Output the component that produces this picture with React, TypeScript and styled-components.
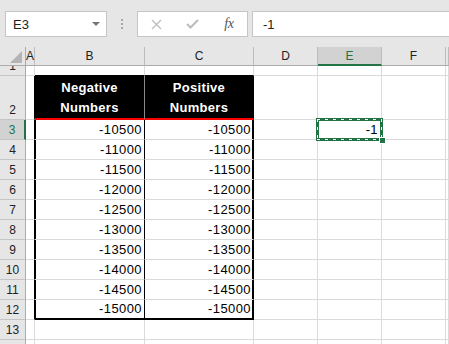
import React from 'react';
import styled, { createGlobalStyle } from 'styled-components';

const GREEN = '#217346';
const GRID = '#dadada';

const GlobalStyle = createGlobalStyle`
  html, body {
    margin: 0;
    padding: 0;
    overflow: hidden;
    background: #fff;
  }
  body {
    font-family: "Liberation Sans", Arial, sans-serif;
  }
`;

const Window = styled.div`
  width: 449px;
  height: 344px;
  overflow: hidden;
  display: flex;
  flex-direction: column;
  background: #fff;
`;

const FormulaBar = styled.div`
  height: 47px;
  flex-shrink: 0;
  box-sizing: border-box;
  background: #e6e6e6;
  display: flex;
  align-items: flex-start;
  padding: 11px 0 0 5px;
`;

const NameBox = styled.div`
  width: 102px;
  height: 26px;
  box-sizing: border-box;
  background: #fff;
  border: 1px solid #c6c6c6;
  display: flex;
  align-items: center;
  justify-content: space-between;
  padding: 0 6px 0 7px;
  font-size: 13px;
  color: #222;
`;

const DropArrow = styled.span`
  width: 0;
  height: 0;
  border-left: 4px solid transparent;
  border-right: 4px solid transparent;
  border-top: 4px solid #767676;
`;

const Grip = styled.div`
  width: 30px;
  height: 26px;
  display: flex;
  flex-direction: column;
  align-items: center;
  justify-content: center;
  gap: 2px;
`;

const GripDot = styled.span`
  width: 2px;
  height: 2px;
  background: #a8a8a8;
`;

const FxBox = styled.div`
  width: 111px;
  height: 26px;
  box-sizing: border-box;
  background: #fff;
  border: 1px solid #c6c6c6;
  display: grid;
  grid-template-columns: repeat(3, 1fr);
  align-items: center;
  justify-items: center;
  margin-right: 4px;
`;

const FxLabel = styled.span`
  font-family: "Liberation Serif", "Times New Roman", serif;
  font-style: italic;
  font-size: 14px;
  color: #555;
  letter-spacing: -0.5px;
`;

const FormulaInput = styled.div`
  flex: 1;
  height: 26px;
  box-sizing: border-box;
  background: #fff;
  border: 1px solid #c6c6c6;
  border-right: none;
  display: flex;
  align-items: center;
  padding-left: 10px;
  font-size: 13px;
  color: #222;
`;

const Sheet = styled.div`
  flex: 1;
  display: grid;
  grid-template-columns: 26px 9px 110px 109px 64px 64px 64px 1fr;
  grid-template-rows: 19px 10px 44px repeat(12, 20px);
  font-size: 13px;
  letter-spacing: 0.4px;
  color: #000;
  overflow: hidden;
`;

const Corner = styled.div`
  position: relative;
  background: #e6e6e6;
  border-right: 1px solid #ababab;
  border-bottom: 1px solid #ababab;
  box-sizing: border-box;
`;

const CornerTri = styled.svg`
  position: absolute;
  right: 3px;
  bottom: 2px;
`;

const ColHead = styled.div<{ $active?: boolean }>`
  box-sizing: border-box;
  background: ${p => (p.$active ? '#d2d2d2' : '#e6e6e6')};
  border-right: 1px solid #bcbcbc;
  border-bottom: ${p => (p.$active ? `2px solid ${GREEN}` : '1px solid #ababab')};
  color: ${p => (p.$active ? GREEN : '#222')};
  font-size: 12px;
  letter-spacing: 0;
  display: flex;
  align-items: center;
  justify-content: center;
  overflow: visible;
  white-space: nowrap;
`;

const RowHead = styled.div<{ $active?: boolean }>`
  box-sizing: border-box;
  background: ${p => (p.$active ? '#d2d2d2' : '#e6e6e6')};
  border-right: ${p => (p.$active ? `2px solid ${GREEN}` : '1px solid #ababab')};
  border-bottom: 1px solid #c4c4c4;
  color: ${p => (p.$active ? GREEN : '#222')};
  font-size: 12px;
  letter-spacing: 0;
  line-height: 16px;
  display: flex;
  align-items: flex-end;
  justify-content: center;
  padding-bottom: 1px;
  overflow: hidden;
`;

const Cell = styled.div<{ $rightBlack?: boolean; $bottomBlack?: boolean }>`
  position: relative;
  box-sizing: border-box;
  border-right: 1px solid ${p => (p.$rightBlack ? '#000' : GRID)};
  border-bottom: 1px solid ${p => (p.$bottomBlack ? '#000' : GRID)};
  display: flex;
  align-items: flex-end;
  justify-content: flex-end;
  line-height: 18px;
  padding-right: 2px;
  white-space: nowrap;
`;

const TitleCell = styled.div<{ $side: 'left' | 'right' }>`
  box-sizing: border-box;
  background: #000;
  color: #fff;
  font-weight: bold;
  letter-spacing: 0.3px;
  line-height: 20px;
  text-align: center;
  display: flex;
  flex-direction: column;
  justify-content: flex-end;
  align-items: center;
  border-right: 1px solid ${p => (p.$side === 'left' ? '#8a8a8a' : '#000')};
  border-bottom: 2px solid #ff0000;
`;

const NumCell = styled.div<{ $side: 'left' | 'right'; $last?: boolean }>`
  box-sizing: border-box;
  border-right: 1px solid #000;
  border-bottom: ${p => (p.$last ? '2px solid #000' : `1px solid ${GRID}`)};
  box-shadow: ${p => (p.$side === 'left' ? 'inset 1px 0 0 #000' : 'inset -1px 0 0 #000')};
  display: flex;
  align-items: flex-end;
  justify-content: flex-end;
  line-height: 18px;
  padding-right: 2px;
`;

const ActiveCell = styled(Cell)`
  overflow: visible;
  z-index: 2;
  padding-right: 3px;
`;

// copy marquee: solid green frame with white ticks running along its middle
const Marquee = styled.div`
  position: absolute;
  top: -2px;
  left: -2px;
  right: -2px;
  bottom: -2px;
  border: 3px solid ${GREEN};
  pointer-events: none;

  &::after {
    content: '';
    position: absolute;
    inset: -2px;
    background:
      repeating-linear-gradient(90deg, #fff 0 3px, transparent 3px 8px) top left / 100% 1px no-repeat,
      repeating-linear-gradient(90deg, #fff 0 3px, transparent 3px 8px) bottom left / 100% 1px no-repeat,
      repeating-linear-gradient(180deg, #fff 0 3px, transparent 3px 8px) top left / 1px 100% no-repeat,
      repeating-linear-gradient(180deg, #fff 0 3px, transparent 3px 8px) top right / 1px 100% no-repeat;
  }
`;

const FillHandle = styled.span`
  position: absolute;
  right: -5px;
  bottom: -5px;
  width: 5px;
  height: 5px;
  background: ${GREEN};
  border: 1px solid #fff;
  z-index: 2;
`;

const CellText = styled.span`
  position: relative;
  z-index: 1;
`;

const columns = ['A', 'B', 'C', 'D', 'E', 'F', 'G'];
const values = Array.from({ length: 10 }, (_, i) => -10500 - i * 500);

function App() {
  const rows: React.ReactNode[] = [];

  // row 1 is short and carries the table's top edge
  rows.push(
    <React.Fragment key="r1">
      <RowHead>1</RowHead>
      <Cell />
      <Cell $bottomBlack />
      <Cell $bottomBlack />
      <Cell />
      <Cell />
      <Cell />
      <Cell />
    </React.Fragment>
  );

  // row 2, the headings
  rows.push(
    <React.Fragment key="r2">
      <RowHead>2</RowHead>
      <Cell $rightBlack />
      <TitleCell $side="left">
        <span>Negative</span>
        <span>Numbers</span>
      </TitleCell>
      <TitleCell $side="right">
        <span>Positive</span>
        <span>Numbers</span>
      </TitleCell>
      <Cell />
      <Cell />
      <Cell />
      <Cell />
    </React.Fragment>
  );

  values.forEach((v, i) => {
    const n = i + 3;
    const last = i === values.length - 1;
    rows.push(
      <React.Fragment key={'r' + n}>
        <RowHead $active={n === 3}>{n}</RowHead>
        <Cell $rightBlack />
        <NumCell $side="left" $last={last}>{v}</NumCell>
        <NumCell $side="right" $last={last}>{v}</NumCell>
        <Cell />
        {n === 3 ? (
          <ActiveCell>
            <Marquee />
            <FillHandle />
            <CellText>-1</CellText>
          </ActiveCell>
        ) : (
          <Cell />
        )}
        <Cell />
        <Cell />
      </React.Fragment>
    );
  });

  [13, 14].forEach(n => {
    rows.push(
      <React.Fragment key={'r' + n}>
        <RowHead>{n}</RowHead>
        {columns.map(c => (
          <Cell key={c} />
        ))}
      </React.Fragment>
    );
  });

  return (
    <Window>
      <GlobalStyle />
      <FormulaBar>
        <NameBox>
          <span>E3</span>
          <DropArrow />
        </NameBox>
        <Grip>
          <GripDot />
          <GripDot />
          <GripDot />
        </Grip>
        <FxBox>
          <svg width="11" height="11" viewBox="0 0 11 11">
            <path d="M1 1 L10 10 M10 1 L1 10" stroke="#bdbdbd" strokeWidth="1.3" fill="none" />
          </svg>
          <svg width="13" height="10" viewBox="0 0 13 10">
            <path d="M1 5 L4.5 8.5 L12 1" stroke="#bdbdbd" strokeWidth="2" fill="none" />
          </svg>
          <FxLabel>fx</FxLabel>
        </FxBox>
        <FormulaInput>-1</FormulaInput>
      </FormulaBar>
      <Sheet>
        <Corner>
          <CornerTri width="12" height="12" viewBox="0 0 12 12">
            <polygon points="12,0 12,12 0,12" fill="#b4b4b4" />
          </CornerTri>
        </Corner>
        {columns.map(c => (
          <ColHead key={c} $active={c === 'E'}>
            {c === 'G' ? '' : c}
          </ColHead>
        ))}
        {rows}
      </Sheet>
    </Window>
  );
}

export default App;
